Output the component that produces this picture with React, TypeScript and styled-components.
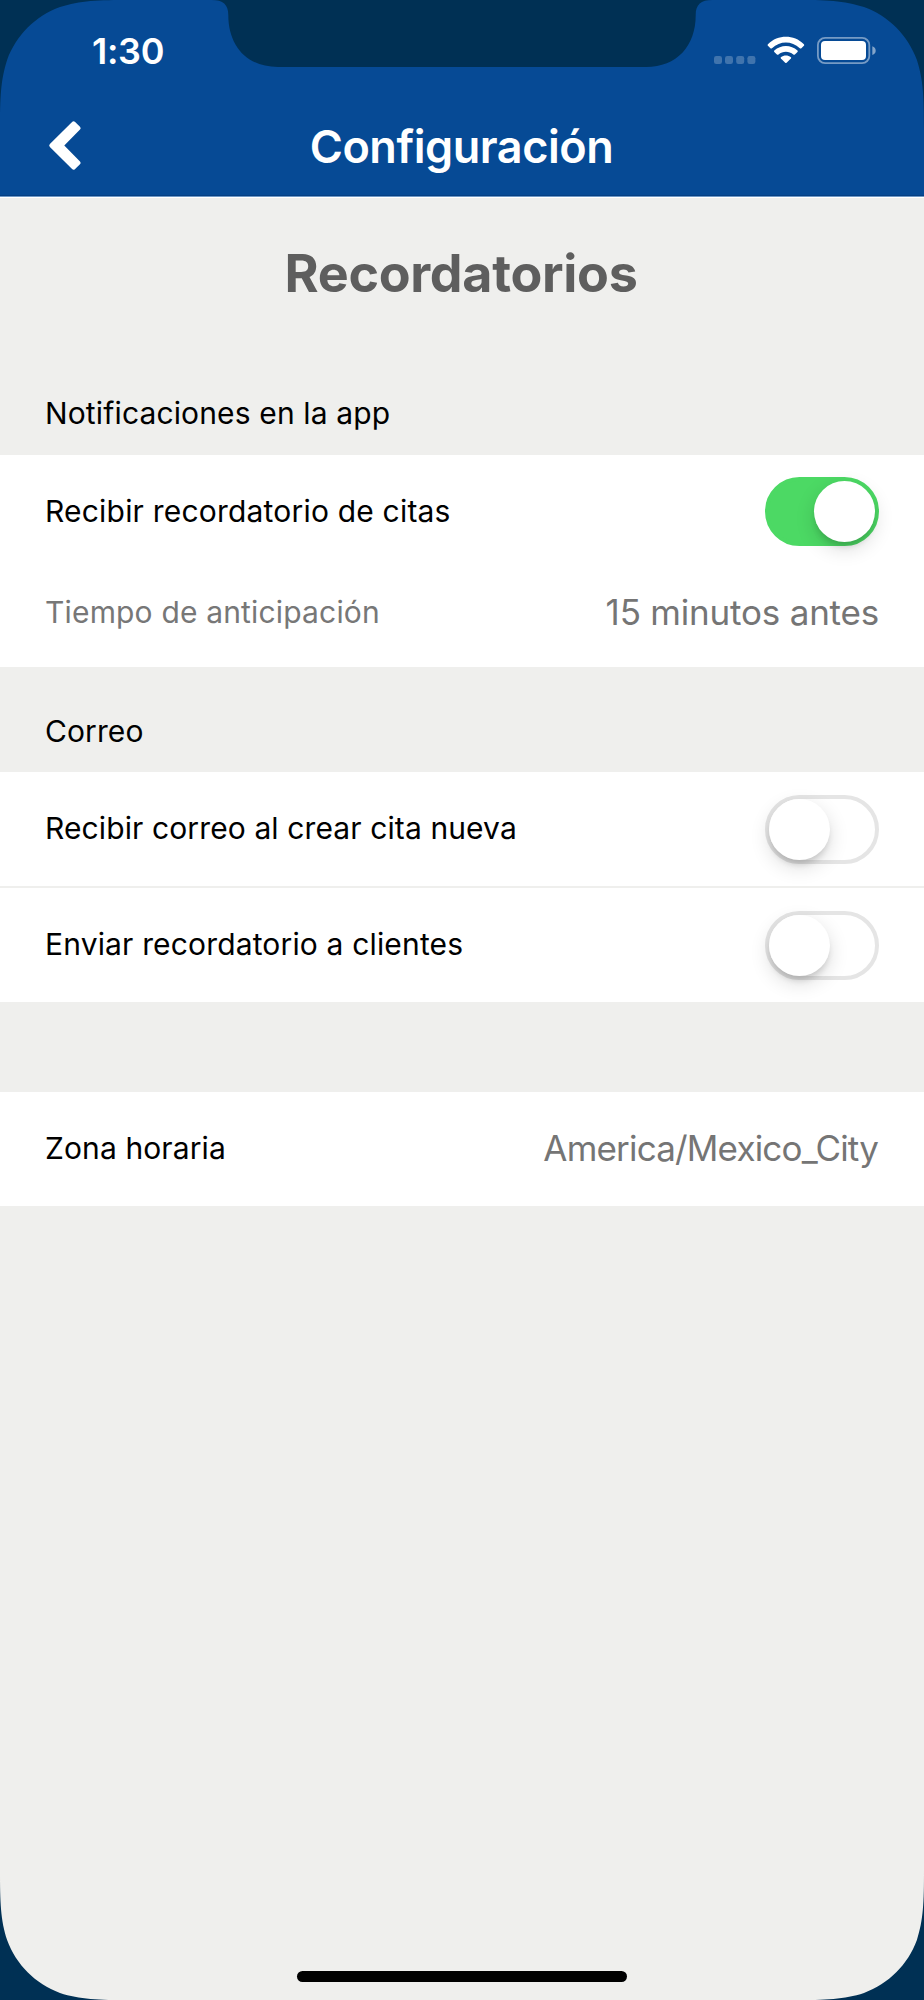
import React, { useState } from 'react';
import styled, { createGlobalStyle } from 'styled-components';

const GlobalStyle = createGlobalStyle`
  *, *::before, *::after { box-sizing: border-box; }
  body { margin: 0; background: #efefed; }
`;

const Screen = styled.div`
  position: relative;
  display: flex;
  flex-direction: column;
  width: 924px;
  height: 2000px;
  overflow: hidden;
  background: #efefed;
  color: #000;
  font-family: Inter, 'Liberation Sans', sans-serif;
  font-size: 30px;
`;

const Header = styled.header`
  display: flex;
  flex-direction: column;
  height: 198px;
  background: #064a95;
  border-bottom: 1px solid #fff;
  box-shadow: inset 0 -1px 0 #6d98c6, inset 0 -2px 0 #053f82;
  color: #fff;
`;

const StatusBar = styled.div`
  display: flex;
  justify-content: space-between;
  height: 100px;
  padding: 0 48px 0 92px;
`;

const Clock = styled.time`
  padding-top: 29px;
  font-size: 36px;
  font-weight: 600;
  line-height: 44px;
  letter-spacing: -0.3px;
`;

const StatusIcons = styled.svg`
  display: block;
  width: 162px;
  height: 30px;
  margin-top: 35px;
`;

const NavBar = styled.nav`
  display: grid;
  grid-template-columns: 1fr auto 1fr;
  height: 97px;
  padding: 0 49px 0 48px;
`;

const BackButton = styled.button`
  justify-self: start;
  width: 34px;
  height: 52px;
  margin: 19px 0 0;
  padding: 0;
  border: 0;
  background: none;
  color: inherit;

  svg { display: block; }
`;

const NavTitle = styled.h1`
  margin: 19px 0 0;
  font-size: 45px;
  font-weight: 600;
  line-height: 56px;
  letter-spacing: -0.46px;
`;

const PageTitle = styled.h2`
  height: 184px;
  margin: 0;
  padding: 44px 2px 0 0;
  color: #5e5e5e;
  font-size: 52px;
  font-weight: 700;
  line-height: 64px;
  letter-spacing: -0.31px;
  text-align: center;
`;

const SectionHeader = styled.h3<{ $height: number; $bottom?: number; $spacing: number }>`
  display: flex;
  align-items: flex-end;
  height: ${p => p.$height}px;
  margin: 0;
  padding: 0 45px ${p => p.$bottom ?? 22}px;
  font-size: 30px;
  font-weight: 400;
  line-height: 40px;
  letter-spacing: ${p => p.$spacing}px;
`;

const Group = styled.section<{ $top?: number }>`
  margin-top: ${p => p.$top ?? 0}px;
  background: #fff;
`;

const Row = styled.div<{ $height?: number; $divided?: boolean }>`
  display: flex;
  align-items: flex-start;
  justify-content: space-between;
  height: ${p => p.$height ?? 114}px;
  padding: ${p => (p.$height ? 21 : 34)}px 45px 0;
  ${p => p.$divided && 'box-sizing: content-box; height: 80px; border-bottom: 2px solid #efefed;'}
`;

const Label = styled.span<{ $muted?: boolean; $spacing: number }>`
  line-height: 44px;
  letter-spacing: ${p => p.$spacing}px;
  color: ${p => (p.$muted ? '#777' : '#000')};
`;

const Value = styled.span<{ $spacing: number; $inset?: number }>`
  padding-right: ${p => p.$inset ?? 0}px;
  color: #757575;
  font-size: 35px;
  line-height: 44px;
  letter-spacing: ${p => p.$spacing}px;
`;

const Track = styled.button<{ $on: boolean; $lift: number }>`
  display: flex;
  align-items: center;
  justify-content: ${p => (p.$on ? 'flex-end' : 'flex-start')};
  width: 114px;
  height: 69px;
  margin: -${p => p.$lift}px 0 0;
  padding: 0;
  border: 4px solid ${p => (p.$on ? '#4cd964' : '#e5e5e5')};
  border-radius: 35px;
  background: ${p => (p.$on ? '#4cd964' : '#fff')};
`;

const Knob = styled.span`
  width: 61px;
  height: 61px;
  border-radius: 50%;
  background: #fff;
  box-shadow: 0 7px 20px rgba(0, 0, 0, 0.14), 0 6px 6px -2px rgba(0, 0, 0, 0.14);
`;

const HomeIndicator = styled.div`
  align-self: center;
  width: 330px;
  height: 11px;
  margin: auto 0 18px;
  border-radius: 6px;
  background: #000;
`;

const Bezel = styled.svg`
  position: absolute;
  inset: 0;
  width: 924px;
  height: 2000px;
  pointer-events: none;
`;

const CORNER =
  'M0 0H130C98 0 80 0.6 60 7.1C35.4 16.1 16.1 35.4 7.1 60C0.6 80 0 98 0 130Z';

function Toggle({ initial, label, lift = 11 }: { initial: boolean; label: string; lift?: number }) {
  const [on, setOn] = useState(initial);
  return (
    <Track
      type="button"
      role="switch"
      aria-checked={on}
      aria-label={label}
      $on={on}
      $lift={lift}
      onClick={() => setOn(!on)}
    >
      <Knob />
    </Track>
  );
}

export default function App() {
  return (
    <Screen>
      <GlobalStyle />
      <Header>
        <StatusBar>
          <Clock>1:30</Clock>
          <StatusIcons viewBox="714 35 162 30" fill="#fff">
            <g opacity="0.23">
              <rect x="714" y="56" width="8" height="8" rx="2.3" />
              <rect x="725" y="56" width="8" height="8" rx="2.3" />
              <rect x="736.2" y="56" width="8" height="8" rx="2.3" />
              <rect x="747.4" y="56" width="8" height="8" rx="2.3" />
            </g>
            <path d="M767.9 44.2C778 34.4 793.8 34.4 803.9 44.2Q804.5 45 803.9 45.8L801.4 48.2Q800.6 48.8 799.8 48.2C791.7 40.5 780.1 40.5 772 48.2Q771.2 48.8 770.4 48.2L767.9 45.8Q767.3 45 767.9 44.2Z" />
            <path d="M774.3 50.6C780.8 44.6 791 44.6 797.5 50.6Q798.1 51.3 797.5 52L794.9 54.5Q794.1 55.1 793.3 54.5C789.1 50.8 782.7 50.8 778.5 54.5Q777.7 55.1 776.9 54.5L774.3 52Q773.7 51.3 774.3 50.6Z" />
            <path d="M780.9 57.2C783.7 55 788.1 55 790.9 57.2Q791.5 57.8 790.9 58.5L786.6 62.7Q785.9 63.3 785.2 62.7L780.9 58.5Q780.3 57.8 780.9 57.2Z" />
            <rect x="817.9" y="37.9" width="51.4" height="25.2" rx="7.2" fill="none" stroke="#fff" strokeWidth="1.8" opacity="0.45" />
            <rect x="821" y="41" width="45" height="19" rx="4" />
            <path d="M872.3 46.2Q875.7 47.6 875.7 50.7T872.3 55Z" opacity="0.5" />
          </StatusIcons>
        </StatusBar>
        <NavBar>
          <BackButton type="button" aria-label="Atrás">
            <svg width="34" height="52" viewBox="48 119 34 52">
              <path
                d="M73.5 123.3L78.6 128.2L61.4 145.5L78.6 162.8L73.5 167.7L51.3 145.5Z"
                fill="#fff"
                stroke="#fff"
                strokeWidth="4"
                strokeLinejoin="round"
              />
            </svg>
          </BackButton>
          <NavTitle>Configuración</NavTitle>
        </NavBar>
      </Header>

      <PageTitle>Recordatorios</PageTitle>

      <SectionHeader $height={73} $spacing={0.14}>Notificaciones en la app</SectionHeader>
      <Group>
        <Row>
          <Label $spacing={0.2}>Recibir recordatorio de citas</Label>
          <Toggle initial lift={12} label="Recibir recordatorio de citas" />
        </Row>
        <Row $height={98}>
          <Label $muted $spacing={0.17}>Tiempo de anticipación</Label>
          <Value $spacing={-0.2}>15 minutos antes</Value>
        </Row>
      </Group>

      <SectionHeader $height={105} $bottom={21} $spacing={0.1}>Correo</SectionHeader>
      <Group>
        <Row $divided>
          <Label $spacing={0.11}>Recibir correo al crear cita nueva</Label>
          <Toggle initial={false} label="Recibir correo al crear cita nueva" />
        </Row>
        <Row>
          <Label $spacing={0.16}>Enviar recordatorio a clientes</Label>
          <Toggle initial={false} label="Enviar recordatorio a clientes" />
        </Row>
      </Group>

      <Group $top={90}>
        <Row>
          <Label $spacing={0.11}>Zona horaria</Label>
          <Value $spacing={-0.82} $inset={1}>America/Mexico_City</Value>
        </Row>
      </Group>

      <HomeIndicator />

      <Bezel viewBox="0 0 924 2000" fill="#003054" aria-hidden="true">
        <path d={CORNER} />
        <path d={CORNER} transform="translate(924 0) scale(-1 1)" />
        <path d={CORNER} transform="translate(0 2000) scale(1 -1)" />
        <path d={CORNER} transform="translate(924 2000) scale(-1 -1)" />
        <path d="M212 0C223 0 228.3 4.5 228.3 15C228.3 46 247 67 278 67H646C677 67 695.7 46 695.7 15C695.7 4.5 701 0 712 0Z" />
      </Bezel>
    </Screen>
  );
}
